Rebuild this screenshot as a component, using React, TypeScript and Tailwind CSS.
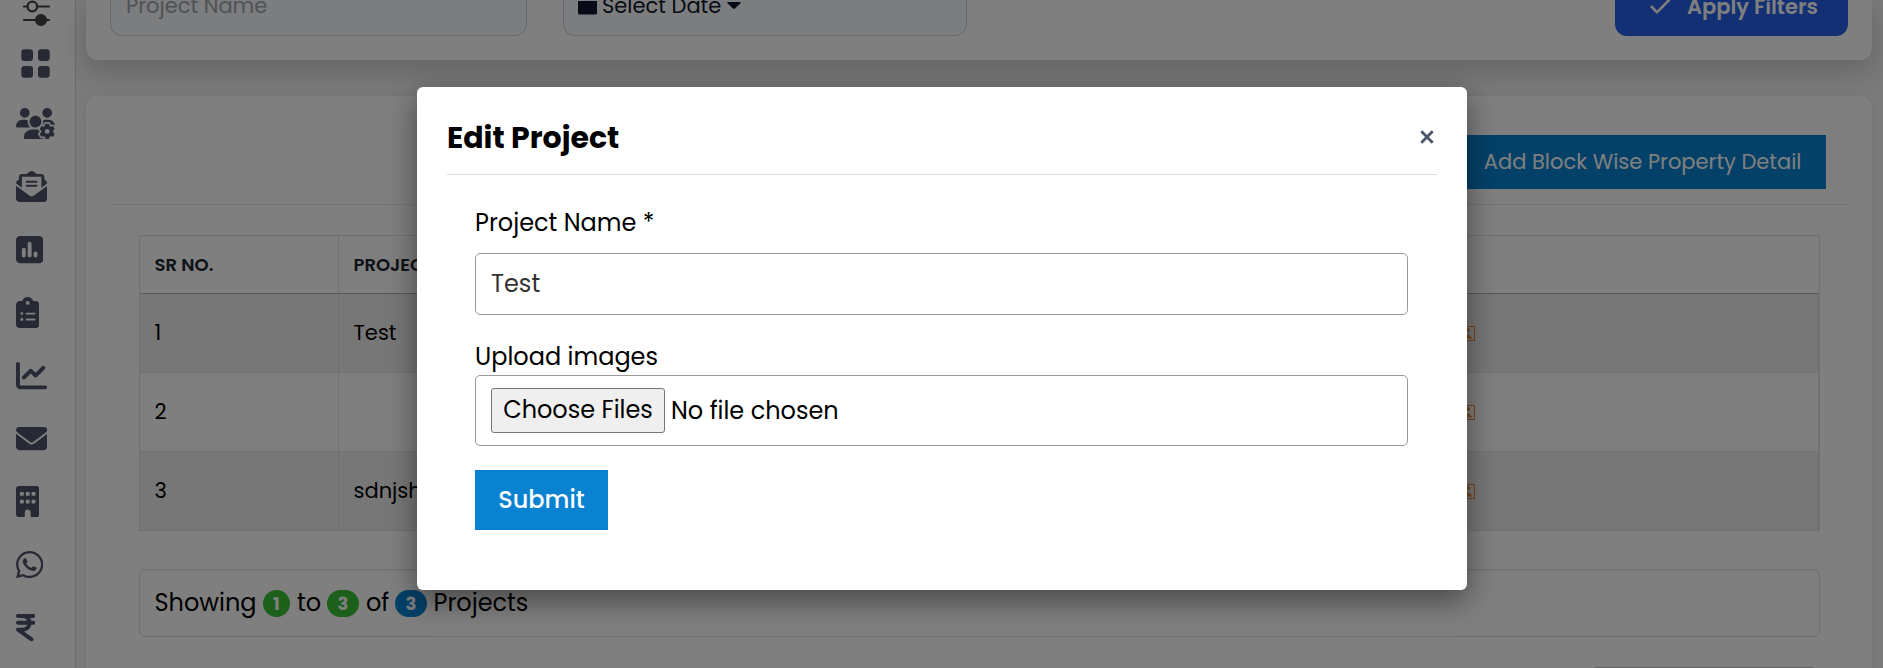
import {
  FaUsersGear,
  FaEnvelopeOpenText,
  FaSquarePollVertical,
  FaClipboardList,
  FaChartLine,
  FaEnvelope,
  FaBuilding,
  FaWhatsapp,
  FaIndianRupeeSign,
} from 'react-icons/fa6';

const menuIcons = [
  { icon: FaUsersGear, size: 'h-[31.25px] w-[39px]' },
  { icon: FaEnvelopeOpenText, size: 'h-[31.25px] w-[31.25px]' },
  { icon: FaSquarePollVertical, size: 'h-[31.25px] w-[27.3px]' },
  { icon: FaClipboardList, size: 'h-[31.25px] w-[23.4px]' },
  { icon: FaChartLine, size: 'h-[31.25px] w-[31.25px]' },
  { icon: FaEnvelope, size: 'h-[31.25px] w-[31.25px]' },
  { icon: FaBuilding, size: 'h-[31.25px] w-[23.4px]' },
  { icon: FaWhatsapp, size: 'h-[31.25px] w-[27.3px]' },
  { icon: FaIndianRupeeSign, size: 'h-[31.25px] w-[19.5px]' },
];

const projects = [
  { id: 1, name: 'Test' },
  { id: 2, name: '' },
  { id: 3, name: 'sdnjsh' },
];

function SlidersIcon() {
  return (
    <svg width="28" height="27" viewBox="0 0 28 27" fill="none" stroke="#444" strokeWidth="2.2">
      <path d="M1 6.5H4.5M14.5 6.5H26M1 20H26" strokeLinecap="round" />
      <circle cx="9.3" cy="6.5" r="4.8" />
      <circle cx="18" cy="20" r="5" fill="#444" />
    </svg>
  );
}

function GridIcon() {
  return (
    <svg width="29" height="29" viewBox="0 0 29 29" fill="currentColor">
      <rect x="0.3" y="0.3" width="11.7" height="11.7" rx="3" />
      <rect x="17" y="0.3" width="11.7" height="11.7" rx="3" />
      <rect x="0.3" y="17" width="11.7" height="11.7" rx="3" />
      <rect x="17" y="17" width="11.7" height="11.7" rx="3" />
    </svg>
  );
}

function ImageIcon() {
  return (
    <svg width="19" height="15" viewBox="0 0 19 15">
      <rect x="0.5" y="0.5" width="18" height="14" fill="none" stroke="#f0883c" />
      <circle cx="12" cy="4" r="2" fill="#f0883c" />
      <path d="M3 12.5L7 7L9 10L11 8.5H13L16.5 12.5Z" fill="#f0883c" />
    </svg>
  );
}

function Sidebar() {
  return (
    <aside className="h-[668px] w-[76px] shrink-0 overflow-hidden border-r border-[#d8d8dc] bg-white text-[#4f5468]">
      <div className="flex h-[35px] items-start pl-[23px]">
        <SlidersIcon />
      </div>
      <div className="flex h-[57px] items-center pl-[21px]">
        <GridIcon />
      </div>
      {menuIcons.map((item, index) => (
        <div key={index} className="flex h-[63px] items-center pl-[15.5px]">
          <item.icon className={item.size} />
        </div>
      ))}
    </aside>
  );
}

function FilterCard() {
  return (
    <div className="relative flex h-[60px] rounded-b-xl bg-white pl-6 shadow-[0_10px_30px_rgba(0,0,0,0.2)]">
      <div className="h-[36px] w-[417px] rounded-b-xl border border-t-0 border-[#cbd5e1] bg-[#f8fafc] pl-[15px] text-[21px] leading-[12px] text-[#a0a5af]">
        Project Name
      </div>
      <div className="ml-9 flex h-[36px] w-[404px] items-start rounded-b-xl border border-t-0 border-[#cbd5e1] bg-[#f8fafc] pl-[14px] text-[21px] leading-[12px] text-[#0f172a]">
        <svg width="19" height="15" viewBox="0 0 19 15" fill="currentColor">
          <path d="M0 1H19V13a1.6 1.6 0 0 1-1.6 1.6H1.6A1.6 1.6 0 0 1 0 13Z" />
        </svg>
        <span className="ml-[5px] w-[119px] whitespace-nowrap">Select Date</span>
        <svg className="ml-[6px]" width="14" height="10" viewBox="0 0 14 10" fill="currentColor">
          <path d="M1 2H13Q14.2 2.2 13.4 3.2L8 8.6Q7 9.4 6 8.6L0.6 3.2Q-0.2 2.2 1 2Z" />
        </svg>
      </div>
      <div className="mr-6 ml-auto flex h-[36px] w-[233px] items-start rounded-b-xl bg-[#2660e8] pl-[34px] text-[21px] leading-[13px] font-semibold text-white">
        <svg width="23" height="15" viewBox="0 0 23 15" fill="none" stroke="currentColor" strokeWidth="2.6">
          <path d="M2 6L8 12.3L21 -1" strokeLinejoin="round" />
        </svg>
        <span className="ml-[15px] whitespace-nowrap">Apply Filters</span>
      </div>
    </div>
  );
}

function ProjectTable() {
  return (
    <div className="mr-[28px] ml-[29px] mt-[30px] border-x border-t border-[#e0e0e0]">
      <div className="flex h-[58px] items-center border-b border-[#b0b0b0] text-[18px] font-semibold text-[#1a2433]">
        <div className="flex h-full w-[199px] items-center border-r border-[#e0e0e0] pl-[14.5px]">SR NO.</div>
        <div className="pl-[14.5px]">PROJECT NAME</div>
      </div>
      {projects.map((project) => (
        <div
          key={project.id}
          className="flex h-[79px] border-r border-b border-[#e2e2e2] text-[21px] text-black odd:bg-white even:bg-[#efefef]"
        >
          <div className="flex w-[199px] items-center border-r border-[#e2e2e2] pl-[14.5px]">{project.id}</div>
          <div className="flex w-[1117px] items-center pl-[14.5px]">{project.name}</div>
          <div className="flex items-center">
            <ImageIcon />
          </div>
        </div>
      ))}
    </div>
  );
}

function Summary() {
  return (
    <div className="mr-[28px] ml-[29px] mt-[38px] flex h-[68px] items-center rounded-md border border-[#e0e0e0] pl-[14.5px] text-[24px] text-black shadow-[inset_0_1px_2px_rgba(0,0,0,0.06)]">
      <span className="w-[108.5px]">Showing</span>
      <span className="mt-px flex h-[27px] w-[27px] items-center justify-center rounded-full bg-[#38c038] text-[18px] font-bold text-white">1</span>
      <span className="ml-[7px] w-[30px]">to</span>
      <span className="mt-px flex h-[27px] w-[32px] items-center justify-center rounded-full bg-[#38c038] text-[18px] font-bold text-white">3</span>
      <span className="ml-[7px] w-[29px]">of</span>
      <span className="mt-px flex h-[27px] w-[32px] items-center justify-center rounded-full bg-[#0882d1] text-[18px] font-bold text-white">3</span>
      <span className="ml-[6.5px]">Projects</span>
    </div>
  );
}

function EditProjectModal() {
  return (
    <div className="absolute inset-0 flex items-start bg-black/50 pt-[87px] pl-[417px]">
      <div className="h-[503px] w-[1050px] rounded-md bg-white px-[30px] text-[24px] text-black shadow-[0_10px_30px_rgba(0,0,0,0.45)]">
        <div className="flex h-[88px] items-center justify-between border-b border-[#dcdcdc] pt-[14px]">
          <h2 className="text-[30px] leading-[36px] font-bold">Edit Project</h2>
          <svg className="mr-[3px] mb-px" width="14" height="14" viewBox="0 0 14 14" stroke="#4a5568" strokeWidth="2.8">
            <path d="M1.3 1.3L12.7 12.7M12.7 1.3L1.3 12.7" />
          </svg>
        </div>
        <div className="pt-[33px] pr-[29px] pl-[28px]">
          <div className="h-[45px] leading-[30px]">Project Name *</div>
          <div className="flex h-[62px] items-center rounded-[5px] border border-[#999] pl-[15px] text-[#333]">Test</div>
          <div className="mt-[26px] h-[34px] leading-[32px]">Upload images</div>
          <div className="flex h-[71px] items-center rounded-[5px] border border-[#999] pl-[15px]">
            <div className="flex h-[45px] w-[174px] items-center justify-center rounded-[3px] border border-[#767676] bg-[#efefef] pb-[2px] whitespace-nowrap">
              Choose Files
            </div>
            <span className="ml-[6px]">No file chosen</span>
          </div>
          <button className="mt-[24px] flex h-[60px] w-[133px] items-center justify-center bg-[#0882d1] font-medium text-white">
            Submit
          </button>
        </div>
      </div>
    </div>
  );
}

export default function App() {
  return (
    <div className="relative flex h-[668px] w-[1883px] overflow-hidden bg-[#f5f5f7] font-[Poppins,Inter,sans-serif]">
      <Sidebar />
      <main className="mr-[11px] ml-[10px] h-[668px] flex-1">
        <FilterCard />
        <section className="mt-9 h-[600px] rounded-xl bg-white px-6 pt-[39px] shadow-[0_0_12px_rgba(0,0,0,0.06)]">
          <div className="flex h-[70px] items-start justify-end border-b border-[#ebebeb] pr-[22px]">
            <button className="flex h-[54px] w-[366px] items-center justify-end bg-[#0882d1] pr-[24.5px] text-[21px] whitespace-nowrap text-white">
              Add Block Wise Property Detail
            </button>
          </div>
          <ProjectTable />
          <Summary />
          <div className="mt-[30px] mr-[32px] ml-auto h-10 w-[224px] rounded-t border border-[#c8c8c8]" />
        </section>
      </main>
      <EditProjectModal />
    </div>
  );
}
